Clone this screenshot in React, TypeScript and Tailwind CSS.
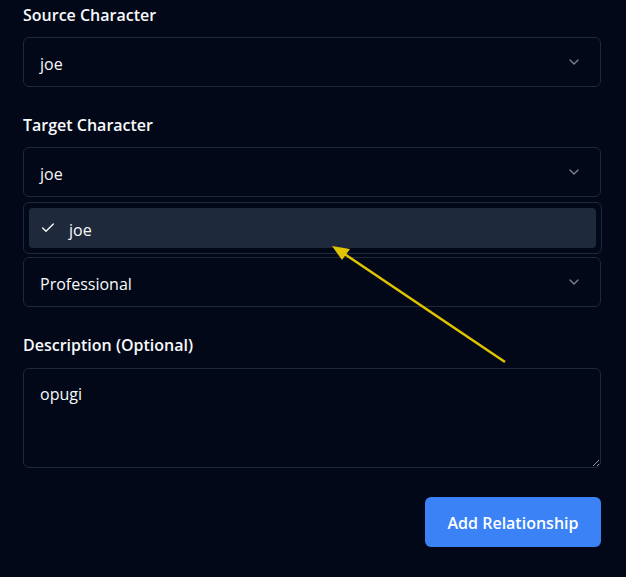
import React from "react";

function Chevron() {
  return (
    <svg width="16" height="16" viewBox="0 0 24 24" fill="none" stroke="currentColor" strokeWidth="2" strokeLinecap="round" strokeLinejoin="round" className="opacity-50">
      <path d="m6 9 6 6 6-6" />
    </svg>
  );
}

function Check() {
  return (
    <svg width="16" height="16" viewBox="0 0 24 24" fill="none" stroke="currentColor" strokeWidth="2" strokeLinecap="round" strokeLinejoin="round">
      <path d="M20 6 9 17l-5-5" />
    </svg>
  );
}

function SelectBox({ value }: { value: string }) {
  return (
    <div className="flex h-[50px] w-full items-center justify-between rounded-md border border-[#1e293b] bg-[#020817] pl-4 pr-[18px] text-[16px]">
      <span className="pt-[3px]">{value}</span>
      <Chevron />
    </div>
  );
}

function Label({ children }: { children?: React.ReactNode }) {
  return <div className="h-6 text-[16px] font-semibold leading-6">{children}</div>;
}

export default function App() {
  return (
    <div
      className="relative min-h-[577px] w-[626px] bg-[#020817] text-[#f8fafc]"
      style={{ fontFamily: '"Open Sans", "Noto Sans", sans-serif' }}
    >
      <div className="flex w-[601px] flex-col pl-[23px] pt-[3px]">
        <Label>Source Character</Label>
        <div className="mt-[10px]">
          <SelectBox value="joe" />
        </div>
        <div className="mt-[26px]">
          <Label>Target Character</Label>
        </div>
        <div className="relative mt-[10px]">
          <SelectBox value="joe" />
          <div className="absolute left-0 right-[-1px] top-[55px] z-10 rounded-md border border-[#1e293b] bg-[#020817] p-[5px]">
            <div className="flex h-10 items-center gap-[13px] rounded-sm bg-[#1e293b] pl-[11px] text-[16px]">
              <Check />
              <span className="pt-[3px]">joe</span>
            </div>
          </div>
        </div>
        <div className="mt-[26px]">
          <Label />
        </div>
        <div className="mt-[10px]">
          <SelectBox value="Professional" />
        </div>
        <div className="mt-[26px]">
          <Label>Description (Optional)</Label>
        </div>
        <textarea
          className="mt-[11px] h-[100px] w-full rounded-md border border-[#1e293b] bg-[#020817] px-4 pb-[11px] pt-[13px] text-[16px] text-[#f8fafc] outline-none"
          defaultValue="opugi"
          style={{ colorScheme: "dark" }}
        />
        <div className="mt-[29px] flex justify-end">
          <button className="h-[50px] w-[176px] rounded-md bg-[#3b82f6] pt-[2px] text-[16px] font-semibold text-white">
            Add Relationship
          </button>
        </div>
      </div>
      <svg className="pointer-events-none absolute left-0 top-0 z-20" width="626" height="577">
        <line x1="505" y1="362" x2="343" y2="253" stroke="#e0c400" strokeWidth="2.5" />
        <polygon points="332,246 350,249 342,260" fill="#e0c400" />
      </svg>
    </div>
  );
}
